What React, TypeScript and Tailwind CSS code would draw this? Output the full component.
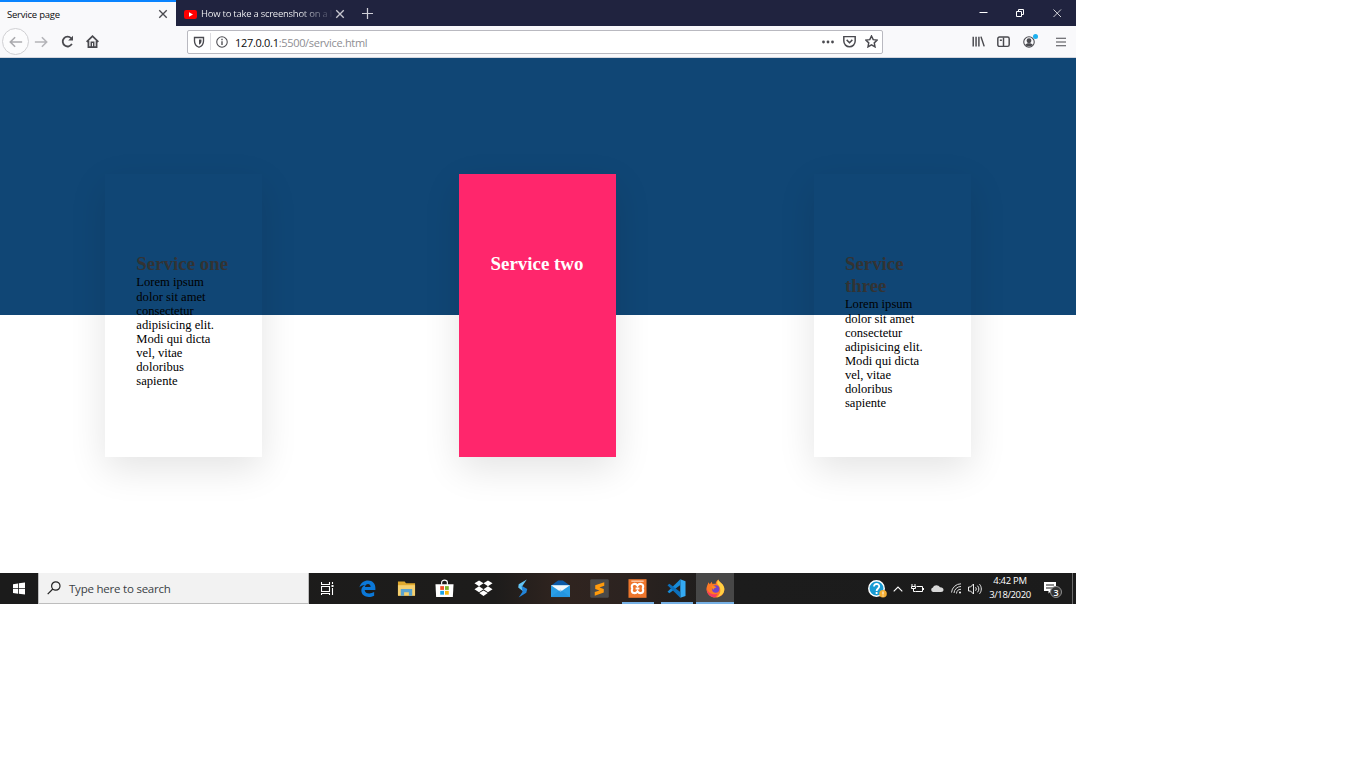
import React from "react";

const lorem = "Lorem ipsum dolor sit amet consectetur adipisicing elit. Modi qui dicta vel, vitae doloribus sapiente";

const services = [
  { title: "Service one", text: lorem, active: false },
  { title: "Service two", text: "", active: true },
  { title: "Service three", text: lorem, active: false },
];

type IconProps = { className?: string; children: React.ReactNode };

// Line icon on a 16 grid
const Line = ({ className = "", children }: IconProps) => (
  <svg viewBox="0 0 16 16" fill="none" stroke="currentColor" strokeWidth="1.8" className={`shrink-0 ${className}`}>
    {children}
  </svg>
);

// Coloured app icon on a 20 grid
const AppIcon = ({ children }: IconProps) => (
  <svg viewBox="0 0 20 20" className="w-[19px] h-[19px] shrink-0">
    {children}
  </svg>
);

const TabBar = () => (
  <div className="flex h-[26px] bg-[#20233f] text-[9.5px] leading-none">
    <div className="flex items-center w-[176px] bg-[#f9f9fb] border-t-2 border-[#0a84ff] pl-[7px] pr-2 text-[#0c0c0d]">
      <span className="whitespace-nowrap tracking-[-0.22px] pt-px">Service page</span>
      <Line className="w-[10px] h-[10px] ml-auto text-[#4a4a4f]">
        <path strokeWidth="2.2" d="M2 2l12 12M14 2L2 14" />
      </Line>
    </div>
    <div className="flex items-center w-[176px] pt-[2px] pl-2 text-[#f9f9fa]">
      <svg viewBox="0 0 13 9" className="w-[13px] h-[9px] shrink-0">
        <rect width="13" height="9" rx="2.2" fill="#f00" />
        <path d="M5 2.3l4 2.2-4 2.2z" fill="#fff" />
      </svg>
      <span className="w-[131px] ml-1 whitespace-nowrap leading-[14px] tracking-[-0.26px] bg-linear-to-r from-[#f9f9fa] from-75% to-[#33364f] bg-clip-text text-transparent">
        How to take a screenshot on a l
      </span>
      <Line className="w-[10px] h-[10px] ml-[3px] text-[#c8c8d0]">
        <path strokeWidth="2.2" d="M2 2l12 12M14 2L2 14" />
      </Line>
    </div>
    <div className="flex items-center w-[20px] pl-[10px]">
      <Line className="w-[11px] h-[11px] text-[#d0d0d8]">
        <path d="M8 0v16M0 8h16" />
      </Line>
    </div>
    <div className="flex items-center gap-[28px] ml-auto pr-[14px] text-white">
      <svg viewBox="0 0 9 9" fill="none" stroke="currentColor" className="w-[9px] h-[9px]">
        <path d="M.5 3.5h8" />
      </svg>
      <svg viewBox="0 0 9 9" fill="none" stroke="currentColor" className="w-[9px] h-[9px]">
        <path d="M.5 2.5h5v5h-5zM2.500 2.500v-2h5v5h-2" />
      </svg>
      <svg viewBox="0 0 9 9" fill="none" stroke="currentColor" strokeWidth=".8" className="w-[9px] h-[9px]">
        <path d="M.5.5l7.500 7.500M8 .5L.5 8" />
      </svg>
    </div>
  </div>
);

const NavBar = () => (
  <div className="flex items-center h-[32px] bg-[#f9f9fb] border-b border-[#d4d6de] text-[#4a4a4f]">
    <div className="flex items-center justify-center w-[27px] h-[27px] ml-[2px] rounded-full border border-[#d0d0d3] bg-[#fcfcfd]">
      <Line className="w-[14px] h-[14px] text-[#aaaaae]">
        <path d="M15 8H2M7 2.5L1.5 8 7 13.5" />
      </Line>
    </div>
    <Line className="w-[14px] h-[14px] ml-[5px] text-[#b4b4b8]">
      <path d="M1 8h13M9 2.5L14.5 8 9 13.5" />
    </Line>
    <Line className="w-[13px] h-[13px] ml-[13px]">
      <path strokeWidth="2.2" d="M13.4 11A6 6 0 1 1 12.5 4" />
      <path d="M14.8.8v6H8.8z" fill="currentColor" stroke="none" />
    </Line>
    <Line className="w-[13px] h-[13px] ml-[12px]">
      <path strokeWidth="2.2" d="M.8 8.5L8 1.5l7.2 7M3 7.5V15h10V7.5" />
      <path d="M6.5 15V9h3v6" />
    </Line>

    <div className="flex items-center w-[696px] h-[24px] ml-[88px] border border-[#b9b9c0] rounded-[2px] bg-white">
      <Line className="w-[12px] h-[12px] ml-[5px]">
        <path d="M2 2h12v4.500C14 11 11.500 13.500 8 15 4.500 13.500 2 11 2 6.500z" />
        <path d="M8 4.500h3.300v2.200c0 2.200-1.200 4-3.300 5z" fill="currentColor" stroke="none" />
      </Line>
      <div className="w-px h-[17px] ml-[5px] bg-[#dcdce0]" />
      <Line className="w-[12px] h-[12px] ml-[5px]">
        <circle cx="8" cy="8" r="7" strokeWidth="1.400" />
        <path d="M8 7v5M8 3.800v1.700" />
      </Line>
      <span className="ml-[7px] pt-px text-[11px] leading-none whitespace-nowrap tracking-[-0.31px] text-[#8e8e93]">
        <span className="text-[#0c0c0d]">127.0.0.1</span>:5500/service.html
      </span>
      <svg viewBox="0 0 12 4" fill="currentColor" className="w-[12px] h-[4px] ml-auto">
        <circle cx="1.500" cy="2" r="1.400" />
        <circle cx="6" cy="2" r="1.400" />
        <circle cx="10.500" cy="2" r="1.400" />
      </svg>
      <Line className="w-[13px] h-[13px] ml-[9px]">
        <path d="M1 2h14v5.500a7 7 0 0 1-14 0zM4.500 6L8 9.500 11.500 6" />
      </Line>
      <Line className="w-[13px] h-[13px] ml-[9px] mr-[4px]">
        <path d="M8 1.200l2.100 4.500 4.900.6-3.600 3.400.9 4.900L8 12.200l-4.300 2.400.9-4.900L1 6.300l4.900-.6z" />
      </Line>
    </div>

    <Line className="w-[13px] h-[13px] ml-[89px]">
      <path d="M1.500 2v12M5 2v12M8.500 2v12M11 2l4 12" />
    </Line>
    <Line className="w-[13px] h-[13px] ml-[12px]">
      <rect x="1" y="2.500" width="14" height="11.500" rx="2" />
      <path d="M8 3v11M3.500 6.500h2.500" />
    </Line>
    <div className="relative ml-[13px]">
      <Line className="w-[12px] h-[12px]">
        <circle cx="8" cy="8" r="7" strokeWidth="1.400" />
        <circle cx="8" cy="6.300" r="3.200" fill="currentColor" stroke="none" />
        <path d="M3 12c1-3 9-3 10 0-2 2.500-8 2.500-10 0z" fill="currentColor" stroke="none" />
      </Line>
      <span className="absolute -top-[2px] -right-[3px] w-[5px] h-[5px] rounded-full bg-[#1fb0ee]" />
    </div>
    <Line className="w-[10px] h-[10px] ml-[21px]">
      <path d="M0 2h16M0 8h16M0 14h16" />
    </Line>
  </div>
);

const ServicePage = () => (
  <div className="h-[515px] pt-[116px] pl-[105px] bg-[linear-gradient(#104675_257px,#ffffff_257px)] font-['Liberation_Serif',serif]">
    <div className="flex gap-[197.3px]">
      {services.map((service) => (
        <div
          key={service.title}
          className={`w-[157px] h-[283px] pt-[79px] px-[31.3px] shrink-0 shadow-[0_12px_35px_rgba(0,0,0,0.11)] ${
            service.active ? "bg-[#ff266c]" : ""
          }`}
        >
          <h2
            className={`text-[18.9px] leading-[22px] font-bold ${
              service.active ? "text-white whitespace-nowrap" : "text-[#333333]"
            }`}
          >
            {service.title}
          </h2>
          <p className="pt-[0.4px] pr-2 text-[12.6px] leading-[14.15px] text-black">{service.text}</p>
        </div>
      ))}
    </div>
  </div>
);

const apps = [
  {
    name: "edge",
    state: "",
    icon: (
      <path
        d="M1.500 9C2.500 4 6.500 1.500 10.500 1.500c5 0 7.800 3.500 7.800 8v2H7c.4 4.500 6.200 4.500 10 2.300v3.700C11.500 20.500 3.500 18.700 3.500 12.200c0-3 1.500-5 4-6-3 .3-5 1-6 2.800zM7.300 8.500h6c0-4.500-5.500-4.200-6 0z"
        fill="#0b78d8"
      />
    ),
  },
  {
    name: "files",
    state: "",
    icon: (
      <>
        <path d="M1 2.500h7l1.500 2H19v13H1z" fill="#e0a92e" />
        <path d="M1 6.500h18v11H1z" fill="#f5d070" />
        <path d="M4 17.500v-7h12v7h-3.500v-3.500h-5v3.500z" fill="#5aa3cf" />
      </>
    ),
  },
  {
    name: "store",
    state: "",
    icon: (
      <>
        <path d="M7 6V3.500C7 .5 13 .5 13 3.500V6" fill="none" stroke="#fff" strokeWidth="1.200" />
        <path d="M.5 5.500h19L18.800 19H1.200z" fill="#fff" />
        <path d="M5.500 7.500h4v4h-4z" fill="#f0512a" />
        <path d="M10.500 7.500h4v4h-4z" fill="#7db52a" />
        <path d="M5.500 12.500h4v4h-4z" fill="#1ca3e8" />
        <path d="M10.500 12.500h4v4h-4z" fill="#f9b90f" />
      </>
    ),
  },
  {
    name: "dropbox",
    state: "",
    icon: (
      <path
        d="M5.300 1.500L10 4.600 5.300 7.700.5 4.600zM14.700 1.500l4.800 3.100-4.800 3.100L10 4.600zM5.300 7.700L10 10.800l-4.700 3.100L.5 10.800zM14.700 7.700l4.800 3.100-4.800 3.100-4.700-3.100zM10 12l4.500 2.800L10 17.800l-4.500-3z"
        fill="#fff"
      />
    ),
  },
  {
    name: "s",
    state: "",
    icon: (
      <>
        <path d="M14.500.5L6 5.500 5.500 9l5 4 1.500-2.500L9.500 8z" fill="#63c5f5" />
        <path d="M9 7l6 3.500-1 4L6 19.500l4-6z" fill="#2384d8" />
      </>
    ),
  },
  {
    name: "mail",
    state: "",
    icon: (
      <>
        <path d="M.5 6.500L7.500 1.500h5l7 5z" fill="#0b5aa8" />
        <path d="M0 6.500h20V19H0z" fill="#2a9ee6" />
        <path d="M0 6.500h20L10 13.500z" fill="#f2f8fc" />
        <path d="M0 19L10 11l10 8z" fill="#1c87d6" opacity=".4" />
      </>
    ),
  },
  {
    name: "sublime",
    state: "",
    icon: (
      <>
        <rect x=".2" y=".2" width="19.600" height="19.600" rx="1.500" fill="#4b4a49" />
        <path d="M15 3.500v3.700L10 9l4.500 1.500v3.800L5 17.500v-3.700L10 12 5.500 10.500V6.700z" fill="#ff9a0b" />
      </>
    ),
  },
  {
    name: "xampp",
    state: "open",
    icon: (
      <>
        <rect x=".5" y=".2" width="19" height="19.600" fill="#ee762c" />
        <path
          d="M10 7C8 4 4 5 4 8c0 1.200.7 2 1.500 2C4.700 10 4 11 4 12c0 3 4 4 6 1 2 3 6 2 6-1 0-1-.7-2-1.500-2 .8 0 1.500-.8 1.500-2 0-3-4-4-6-1zM8 10h4"
          fill="none"
          stroke="#fff"
          strokeWidth="2.200"
        />
        <path d="M3.500 2.300h13" stroke="#ffd5b8" strokeWidth="1.300" />
      </>
    ),
  },
  {
    name: "vscode",
    state: "open",
    icon: (
      <>
        <path d="M14 .3l5.500 2v15.500l-5.500 2z" fill="#34a9f2" />
        <path d="M14 .3v6L2.500 15 .5 13.500z" fill="#178bd8" />
        <path d="M14 19.700v-6L2.500 5 .5 6.500z" fill="#0c70bd" />
      </>
    ),
  },
  {
    name: "firefox",
    state: "active",
    icon: (
      <>
        <path
          d="M2.500 3.500l1.500 2L6 3l1 2.500c1-.5 2-.5 3 0 0-2 1-3.500 3-5 0 2.500 6.300 4.500 6.300 10C19.300 16.500 15 19.500 10 19.500S.5 16 .5 10.500C.5 8 2 6 2.500 3.500z"
          fill="#ff7a24"
        />
        <path d="M13 .5c0 2.500 6.300 4.500 6.300 10 0 4.500-3 7.500-7.800 8.600C17 15 15.500 8 12 5.500 11.500 4 12 1.500 13 .5z" fill="#ffd042" />
        <path d="M.7 9c.5 6 6.500 8.500 11.500 6.500-1 2.500-2.200 3.800-4.200 3.800C4 18.800.5 14.800.7 9z" fill="#f53a62" />
        <circle cx="10.200" cy="10.500" r="3.900" fill="#7443c9" />
        <path d="M5.500 7.500c2-1 4 0 5.500 1.500-2 0-2.500 1-3.500 2.500z" fill="#ff8a20" />
      </>
    ),
  },
];

const Taskbar = () => (
  <div className="flex items-center h-[31px] bg-[linear-gradient(90deg,#1b1b1b_0%,#1d1c1b_46%,#30241f_52%,#2c2320_58%,#1c1c1c_68%,#1b1b1b_100%)] text-white">
    <div className="flex justify-center w-[38px]">
      <svg viewBox="0 0 12 12" fill="#fff" className="w-[12px] h-[13px]">
        <path d="M0 1.700l5-.8v4.800H0zM5.800.8L12 0v5.700H5.800zM0 6.500h5v4.800l-5-.8zM5.800 6.500H12V12l-6.200-.8z" />
      </svg>
    </div>
    <div className="flex items-center w-[271px] h-[31px] pl-[8px] border border-[#bdbdbd] border-t-0 bg-[#f2f2f2] text-[#3a3f45]">
      <svg viewBox="0 0 14 14" fill="none" stroke="#222" strokeWidth="1.200" className="w-[14px] h-[14px]">
        <circle cx="8.800" cy="5" r="4.200" />
        <path d="M5.800 8L.7 13.200" />
      </svg>
      <span className="ml-[8px] pt-[2px] text-[11.5px] leading-none whitespace-nowrap tracking-[-0.22px]">Type here to search</span>
    </div>
    <div className="flex items-center justify-center w-[39.500px] pr-[3px]">
      <svg viewBox="0 0 13 13" fill="none" stroke="#fff" strokeWidth="1.100" className="w-[13px] h-[13px]">
        <path d="M.5 0v2.500h8V0M.5 4.500h8v5h-8zM.5 13v-1.500h8V13M11.500 0v2M11.500 6v7" />
        <path d="M10.500 4h2" strokeWidth="2" />
      </svg>
    </div>
    {apps.map((app) => (
      <div
        key={app.name}
        className={`flex flex-col items-center w-[38.6px] h-[31px] pt-[6px] ${app.state === "active" ? "bg-[#474747]" : ""}`}
      >
        <AppIcon>{app.icon}</AppIcon>
        {app.state !== "" && (
          <div className={`h-[2px] mt-auto bg-[#76b0e4] ${app.state === "active" ? "w-full" : "w-[32px]"}`} />
        )}
      </div>
    ))}

    <div className="flex items-center ml-auto h-full">
      <svg viewBox="0 0 19 18" className="w-[19px] h-[18px]">
        <circle cx="8.500" cy="8.500" r="7.700" fill="#189bd3" stroke="#fff" strokeWidth="1.500" />
        <path d="M6 6.500c0-3.500 5.500-3.200 5.200 0C11.200 8.500 8.600 8.500 8.600 11M8.600 12v2" fill="none" stroke="#fff" strokeWidth="1.800" />
        <circle cx="15" cy="13.800" r="3.800" fill="#f3ad32" />
        <path d="M15 11.500v3M15 15.500v1" stroke="#fff" />
      </svg>
      <svg viewBox="0 0 10 6" fill="none" stroke="#fff" strokeWidth="1.100" className="w-[10px] h-[6px] ml-[6px]">
        <path d="M.7 5.300L5 1l4.300 4.300" />
      </svg>
      <svg viewBox="0 0 13 9" fill="none" stroke="#fff" className="w-[13px] h-[9px] ml-[8px]">
        <path d="M5.500 2.500h6v5h-7M12.500 4v2M1 0v2M4 0v2M.5 2.500h4v2h-4zM2.500 5v2.500h2" />
      </svg>
      <svg viewBox="0 0 14 9" className="w-[14px] h-[9px] ml-[6px]">
        <path d="M3 8a2.300 2.300 0 0 1 0-4.500C4 .5 8.500.5 10 3.300c2-.1 3.500 1 3.500 2.500C13.500 7.200 12.500 8 11 8z" fill="#d8d8d8" />
      </svg>
      <svg viewBox="0 0 11 11" fill="none" stroke="#ddd" className="w-[11px] h-[11px] ml-[7px]">
        <path d="M.5 9.500A9.500 9.500 0 0 1 10 .8M3 10A7 7 0 0 1 10 3.500M5.500 10.500A4.500 4.500 0 0 1 10 6.300" />
        <circle cx="9" cy="9.500" r="1" fill="#fff" stroke="none" />
      </svg>
      <svg viewBox="0 0 14 12" fill="none" stroke="#fff" strokeWidth=".9" className="w-[14px] h-[12px] ml-[6px]">
        <path d="M.5 4h2L5.500 1v10L2.500 8h-2zM7.500 4.200c1 1 1 2.600 0 3.600M9.500 2.700c1.800 2 1.800 4.600 0 6.600M11.500 1.200c2.400 2.800 2.400 6.800 0 9.600" />
      </svg>
      <div className="w-[44px] ml-[6px] -mt-px text-center text-[9.500px] leading-[14px] whitespace-nowrap">
        <div className="tracking-[-0.3px]">4:42 PM</div>
        <div className="tracking-[-0.38px]">3/18/2020</div>
      </div>
      <div className="relative w-[19px] h-[19px] ml-[12px]">
        <svg viewBox="0 0 19 19" className="w-[19px] h-[19px]">
          <path d="M0 3h12v9H7l-2.500 2.500V12H0z" fill="#fff" />
          <path d="M2 6h8M2 9h8" stroke="#1b1b1b" />
          <circle cx="12" cy="13" r="5.500" fill="#333" stroke="#8f8f8f" />
        </svg>
        <span className="absolute left-[6px] top-[8px] w-[12px] text-center text-[9px] font-semibold leading-[11px]">3</span>
      </div>
      <div className="w-px h-full ml-[9px] mr-[3px] bg-[#6b6b6b]" />
    </div>
  </div>
);

const App = () => {
  return (
    <div className="min-h-screen bg-white">
      <div className="w-[1076px] overflow-hidden font-['Open_Sans','Noto_Sans',sans-serif]">
        <TabBar />
        <NavBar />
        <ServicePage />
        <Taskbar />
      </div>
    </div>
  );
};

export default App;
